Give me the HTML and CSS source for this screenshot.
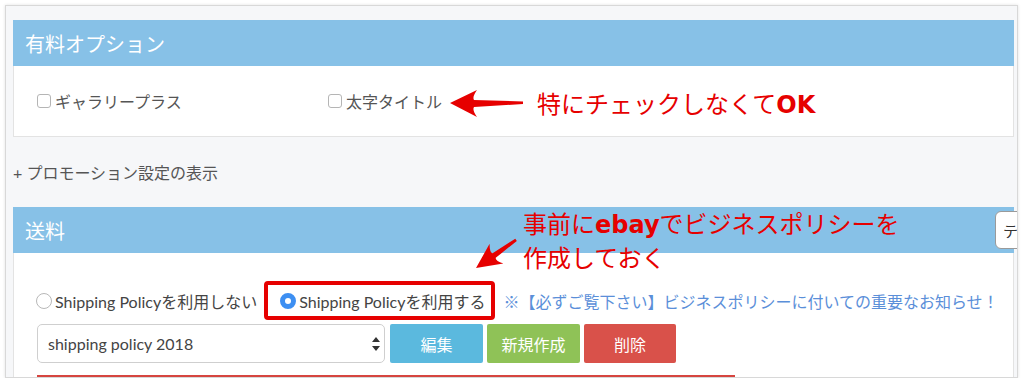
FILE: index.html
```html
<!DOCTYPE html>
<html lang="ja">
<head>
<meta charset="utf-8">
<title>出品設定</title>
<link rel="stylesheet" href="styles.css">
</head>
<body>
<div class="frame">
  <section class="panel">
    <div class="panel-head"><h2>有料オプション</h2></div>
    <div class="panel-body options">
      <label class="check"><span class="box"></span>ギャラリープラス</label>
      <label class="check"><span class="box"></span>太字タイトル</label>
    </div>
  </section>

  <div class="promo">+ プロモーション設定の表示</div>

  <section class="panel">
    <div class="panel-head"><h2>送料</h2><button class="head-btn">テ</button></div>
    <div class="panel-body shipping">
      <div class="radio-row">
        <label class="radio"><span class="dot"></span>Shipping Policyを利用しない</label>
        <label class="radio on hl"><span class="dot"></span>Shipping Policyを利用する</label>
        <a class="notice">※【必ずご覧下さい】ビジネスポリシーに付いての重要なお知らせ！</a>
      </div>
      <div class="select-row">
        <div class="select">shipping policy 2018
          <svg class="updown" width="8" height="14" viewBox="0 0 8 14"><path d="M4 0L8 5H0Z M4 14L8 9H0Z" fill="#333"/></svg>
        </div>
        <button class="btn info">編集</button>
        <button class="btn success">新規作成</button>
        <button class="btn danger">削除</button>
      </div>
      <div class="redline"></div>
    </div>
  </section>

  <div class="note note1">特にチェックしなくて<b>OK</b></div>
  <div class="note note2">事前に<b>ebay</b>でビジネスポリシーを<br>作成しておく</div>

  <svg class="arrows" width="1024" height="384" viewBox="0 0 1024 384">
    <path d="M450 103 L477 90 Q472 97 474 100 L523 101.5 L523 104 L474 107 Q472 110 477 117 Z" fill="#e60000"/>
    <g transform="translate(476 268) rotate(-35)">
      <path d="M0 0 L25 -12 Q20 -5 22 -2.5 L49 -1.5 L49 1.2 L22 3 Q20 5 25 12 Z" fill="#e60000"/>
    </g>
  </svg>
</div>
</body>
</html>
```

FILE: styles.css
```css
body {
  margin: 0;
  background: #fff;
  font-family: "Lato", "Noto Sans CJK JP", sans-serif;
  color: #555;
}

.frame {
  position: relative;
  box-sizing: border-box;
  margin: 5px 0 0 5px;
  width: 1013px;
  height: 373px;
  padding: 14px 0 0 7px;
  background: #f6f7f9;
  border: 1px solid #d8d8d8;
  box-shadow: 0 0 3px rgba(0, 0, 0, 0.12);
  overflow: hidden;
}

.panel {
  margin-right: 3px;
}

.panel-head {
  display: flex;
  align-items: center;
  height: 46px;
  padding: 0 12px;
  background: #87c1e7;
  color: #fff;
}

.panel-head h2 {
  margin: 0;
  font-size: 20px;
  font-weight: normal;
}

.head-btn {
  flex: none;
  margin-left: auto;
  margin-right: -38px;
  width: 45px;
  height: 38px;
  padding: 0 0 0 7px;
  text-align: left;
  border: 1px solid #9a9a9a;
  border-radius: 6px;
  background: #fff;
  color: #333;
  font-family: inherit;
  font-size: 15px;
}

.panel-body {
  box-sizing: border-box;
  background: #fff;
  border: 1px solid #e3e3e3;
  border-top: none;
}

.options {
  display: grid;
  grid-template-columns: 291px auto;
  align-items: center;
  height: 71px;
  padding-left: 23px;
}

.check {
  display: inline-flex;
  align-items: center;
  gap: 4px;
  font-size: 16px;
  color: #555;
}

.box {
  width: 12px;
  height: 12px;
  border: 1px solid #b5b5b5;
  border-radius: 3px;
  background: #fff;
}

.promo {
  display: flex;
  align-items: center;
  height: 70px;
  font-size: 16px;
  color: #555;
}

.shipping {
  height: 140px;
  padding: 33px 0 0 23px;
}

.radio-row {
  display: flex;
  align-items: center;
  height: 30px;
}

.radio {
  display: inline-flex;
  align-items: center;
  gap: 3px;
  margin-left: -1px;
  font-size: 16px;
  color: #444;
}

.dot {
  box-sizing: border-box;
  width: 16px;
  height: 16px;
  border: 1px solid #b8b8b8;
  border-radius: 50%;
  background: #fff;
}

.radio.on {
  margin-left: 23px;
}

.radio.on .dot {
  border: 5px solid #3d8ff2;
  background: #fff;
}

.hl {
  position: relative;
}

.hl::after {
  content: "";
  position: absolute;
  left: -16px;
  right: -10px;
  top: -8px;
  bottom: -7px;
  border: 4px solid #e60000;
  border-radius: 4px;
}

.notice {
  margin-left: 18px;
  font-size: 16px;
  color: #5b8fd9;
}

.select-row {
  display: flex;
  gap: 4px;
  height: 39px;
  margin-top: 8px;
}

.select {
  display: flex;
  align-items: center;
  justify-content: space-between;
  box-sizing: border-box;
  width: 348px;
  margin-right: 1px;
  padding: 0 4px 0 10px;
  border: 1px solid #cfcfcf;
  border-radius: 5px;
  font-size: 16px;
  color: #444;
}

.btn {
  width: 93px;
  height: 39px;
  border: none;
  border-radius: 2px;
  color: #fff;
  font-family: inherit;
  font-size: 16px;
}

.info { background: #5bb9de; }
.success { background: #8fc257; }
.danger { background: #d9514a; width: 92px; }

.redline {
  width: 698px;
  height: 3px;
  margin-top: 12px;
  background: #d6453f;
}

.note {
  position: absolute;
  font-family: "Noto Sans CJK JP", sans-serif;
  font-size: 24px;
  line-height: 32px;
  color: #e60000;
}

.note b {
  font-family: "DejaVu Sans", "Noto Sans CJK JP", sans-serif;
  font-weight: bold;
}

.note1 {
  left: 531px;
  top: 81px;
}

.note2 {
  left: 517px;
  top: 201px;
}

.arrows {
  position: absolute;
  left: -6px;
  top: -6px;
  pointer-events: none;
}
```
